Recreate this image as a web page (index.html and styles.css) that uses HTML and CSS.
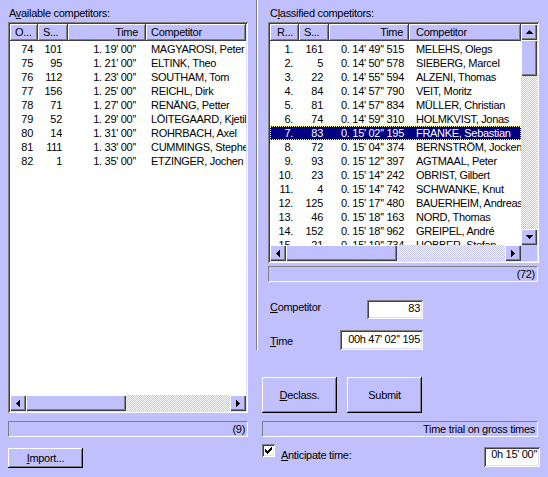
FILE: index.html
```html
<!DOCTYPE html>
<html>
<head>
<meta charset="utf-8">
<title>Competitors</title>
<link rel="stylesheet" href="styles.css">
</head>
<body>
<div class="window">
  <section class="col col-left">
    <div class="caption">A<u>v</u>ailable competitors:</div>
    <div class="listbox lb-left">
      <div class="view">
        <div class="row head cols-a">
          <div class="hc">O...</div><div class="hc">S...</div><div class="hc hc-t">Time</div><div class="hc">Competitor</div>
        </div>
        <div class="rows">
          <div class="row cols-a"><span class="c1">74</span><span class="c2">101</span><span class="ct">1. 19' 00''</span><span class="cn">MAGYAROSI, Peter</span></div>
          <div class="row cols-a"><span class="c1">75</span><span class="c2">95</span><span class="ct">1. 21' 00''</span><span class="cn">ELTINK, Theo</span></div>
          <div class="row cols-a"><span class="c1">76</span><span class="c2">112</span><span class="ct">1. 23' 00''</span><span class="cn">SOUTHAM, Tom</span></div>
          <div class="row cols-a"><span class="c1">77</span><span class="c2">156</span><span class="ct">1. 25' 00''</span><span class="cn">REICHL, Dirk</span></div>
          <div class="row cols-a"><span class="c1">78</span><span class="c2">71</span><span class="ct">1. 27' 00''</span><span class="cn">RENÄNG, Petter</span></div>
          <div class="row cols-a"><span class="c1">79</span><span class="c2">52</span><span class="ct">1. 29' 00''</span><span class="cn">LÖITEGAARD, Kjetil</span></div>
          <div class="row cols-a"><span class="c1">80</span><span class="c2">14</span><span class="ct">1. 31' 00''</span><span class="cn">ROHRBACH, Axel</span></div>
          <div class="row cols-a"><span class="c1">81</span><span class="c2">111</span><span class="ct">1. 33' 00''</span><span class="cn">CUMMINGS, Stephen</span></div>
          <div class="row cols-a"><span class="c1">82</span><span class="c2">1</span><span class="ct">1. 35' 00''</span><span class="cn">ETZINGER, Jochen</span></div>
        </div>
      </div>
      <div class="hscroll">
        <div class="sbtn"><svg width="4" height="7" viewBox="0 0 4 7"><path d="M3 0h1v7h-1z M2 1h1v5h-1z M1 2h1v3h-1z M0 3h1v1h-1z"/></svg></div>
        <div class="thumb thumb-l"></div>
        <div class="track"></div>
        <div class="sbtn"><svg width="4" height="7" viewBox="0 0 4 7"><path d="M0 0h1v7h-1z M1 1h1v5h-1z M2 2h1v3h-1z M3 3h1v1h-1z"/></svg></div>
      </div>
    </div>
  </section>

  <section class="col col-right">
    <div class="top-section">
      <div class="caption cap-r">C<u>l</u>assified competitors:</div>
      <div class="listbox lb-right">
        <div class="view">
          <div class="row head cols-b">
            <div class="hc hc-r1">R...</div><div class="hc">S...</div><div class="hc hc-t2">Time</div><div class="hc">Competitor</div>
          </div>
          <div class="rows">
            <div class="row cols-b"><span class="r1">1.</span><span class="r2">161</span><span class="rt">0. 14' 49'' 515</span><span class="rn">MELEHS, Olegs</span></div>
            <div class="row cols-b"><span class="r1">2.</span><span class="r2">5</span><span class="rt">0. 14' 50'' 578</span><span class="rn">SIEBERG, Marcel</span></div>
            <div class="row cols-b"><span class="r1">3.</span><span class="r2">22</span><span class="rt">0. 14' 55'' 594</span><span class="rn">ALZENI, Thomas</span></div>
            <div class="row cols-b"><span class="r1">4.</span><span class="r2">84</span><span class="rt">0. 14' 57'' 790</span><span class="rn">VEIT, Moritz</span></div>
            <div class="row cols-b"><span class="r1">5.</span><span class="r2">81</span><span class="rt">0. 14' 57'' 834</span><span class="rn">MÜLLER, Christian</span></div>
            <div class="row cols-b"><span class="r1">6.</span><span class="r2">74</span><span class="rt">0. 14' 59'' 310</span><span class="rn">HOLMKVIST, Jonas</span></div>
            <div class="row cols-b selected"><span class="r1">7.</span><span class="r2">83</span><span class="rt">0. 15' 02'' 195</span><span class="rn">FRANKE, Sebastian</span></div>
            <div class="row cols-b"><span class="r1">8.</span><span class="r2">72</span><span class="rt">0. 15' 04'' 374</span><span class="rn">BERNSTRÖM, Jocken</span></div>
            <div class="row cols-b"><span class="r1">9.</span><span class="r2">93</span><span class="rt">0. 15' 12'' 397</span><span class="rn">AGTMAAL, Peter</span></div>
            <div class="row cols-b"><span class="r1">10.</span><span class="r2">23</span><span class="rt">0. 15' 14'' 242</span><span class="rn">OBRIST, Gilbert</span></div>
            <div class="row cols-b"><span class="r1">11.</span><span class="r2">4</span><span class="rt">0. 15' 14'' 742</span><span class="rn">SCHWANKE, Knut</span></div>
            <div class="row cols-b"><span class="r1">12.</span><span class="r2">125</span><span class="rt">0. 15' 17'' 480</span><span class="rn">BAUERHEIM, Andreas</span></div>
            <div class="row cols-b"><span class="r1">13.</span><span class="r2">46</span><span class="rt">0. 15' 18'' 163</span><span class="rn">NORD, Thomas</span></div>
            <div class="row cols-b"><span class="r1">14.</span><span class="r2">152</span><span class="rt">0. 15' 18'' 962</span><span class="rn">GREIPEL, André</span></div>
            <div class="row cols-b"><span class="r1">15.</span><span class="r2">21</span><span class="rt">0. 15' 19'' 734</span><span class="rn">HOBBER, Stefan</span></div>
          </div>
        </div>
        <div class="vscroll">
          <div class="sbtn"><svg width="7" height="4" viewBox="0 0 7 4"><path d="M3 0h1v1h-1z M2 1h3v1h-3z M1 2h5v1h-5z M0 3h7v1h-7z"/></svg></div>
          <div class="thumb thumb-v"></div>
          <div class="track"></div>
          <div class="sbtn"><svg width="7" height="4" viewBox="0 0 7 4"><path d="M0 0h7v1h-7z M1 1h5v1h-5z M2 2h3v1h-3z M3 3h1v1h-1z"/></svg></div>
        </div>
        <div class="hscroll">
          <div class="sbtn"><svg width="4" height="7" viewBox="0 0 4 7"><path d="M3 0h1v7h-1z M2 1h1v5h-1z M1 2h1v3h-1z M0 3h1v1h-1z"/></svg></div>
          <div class="thumb thumb-r"></div>
          <div class="track"></div>
          <div class="sbtn"><svg width="4" height="7" viewBox="0 0 4 7"><path d="M0 0h1v7h-1z M1 1h1v5h-1z M2 2h1v3h-1z M3 3h1v1h-1z"/></svg></div>
        </div>
        <div class="corner"></div>
      </div>
      <div class="status status-list">(72)</div>
      <div class="field field-comp">
        <span class="flabel fl-comp"><u>C</u>ompetitor</span>
        <div class="edit edit-comp">83</div>
      </div>
      <div class="field field-time">
        <span class="flabel fl-time"><u>T</u>ime</span>
        <div class="edit edit-time">00h 47' 02'' 195</div>
      </div>
    </div>
    <div class="actions">
      <div class="btn btn-big"><span><u>D</u>eclass.</span></div>
      <div class="btn btn-big"><span>Submit</span></div>
    </div>
  </section>

  <div class="status status-left">(9)</div>
  <div class="status status-right">Time trial on gross times</div>

  <div class="bottom-left">
    <div class="btn btn-import"><span><u>I</u>mport...</span></div>
  </div>
  <div class="bottom-right">
    <div class="checkbox"><svg width="7" height="7" viewBox="0 0 7 7"><path d="M6 0h1v1h-1z M5 1h2v1h-2z M0 2h1v1h-1z M4 2h3v1h-3z M0 3h2v1h-2z M3 3h3v1h-3z M0 4h5v1h-5z M1 5h3v1h-3z M2 6h1v1h-1z"/></svg></div>
    <span class="chk-label"><u>A</u>nticipate time:</span>
    <div class="edit edit-ant">0h 15' 00''</div>
  </div>
</div>
</body>
</html>
```

FILE: styles.css
```css
* { box-sizing: border-box; }
html, body { margin: 0; padding: 0; }
body {
  width: 548px;
  height: 477px;
  overflow: hidden;
  background: #c0c0ff;
  font-family: "Liberation Sans", Arial, sans-serif;
  font-size: 11px;
  letter-spacing: -0.3px;
  color: #000;
}
u { text-decoration: underline; text-underline-offset: 1px; text-decoration-thickness: 1px; }

.window {
  display: grid;
  grid-template-columns: 240px 284px;
  grid-template-rows: 413px 24px 31px;
  column-gap: 8px;
  padding: 0 8px;
}

.col { display: flex; flex-direction: column; min-height: 0; }
.col-right { justify-content: space-between; }

.caption {
  height: 13px;
  line-height: 13px;
  margin-top: 7px;
  padding-left: 1px;
  white-space: nowrap;
}
.cap-r { padding-left: 2px; }

/* list boxes */
.listbox {
  margin-top: 2px;
  background: #fff;
  padding: 2px;
  box-shadow: inset 1px 1px #808080, inset -1px -1px #fff, inset 2px 2px #404040, inset -2px -2px #dfdfff;
  display: grid;
  min-height: 0;
}
.lb-left {
  flex: 1;
  grid-template-columns: 1fr;
  grid-template-rows: 1fr 16px;
}
.lb-right {
  width: 271px;
  height: 241px;
  flex: none;
  grid-template-columns: 1fr 16px;
  grid-template-rows: 1fr 16px;
}
.view { overflow: hidden; min-height: 0; min-width: 0; background: #fff; }
.rows { padding-top: 1px; }

.row { display: grid; height: 14px; line-height: 14px; white-space: nowrap; }
.cols-a { grid-template-columns: 28px 30px 78px 1fr; }
.cols-b { grid-template-columns: 29px 30px 80px 1fr; }
.row > span { overflow: hidden; }

.head { height: 17px; line-height: 16px; }
.hc {
  background: #c0c0ff;
  box-shadow: inset -1px -1px #404040, inset 1px 1px #fff, inset -2px -2px #808080;
  padding: 0 5px;
  overflow: hidden;
  white-space: nowrap;
}
.hc-t { text-align: right; padding-right: 8px; }
.hc-r1 { padding-left: 7px; }
.hc-t2 { text-align: right; padding-right: 6px; }
.cols-b .hc:last-child { padding-left: 7px; }
.cols-a .hc:last-child { padding-left: 5px; }

.c1 { text-align: right; padding-right: 5px; }
.c2 { text-align: right; padding-right: 6px; }
.ct { text-align: right; padding-right: 10px; }
.cn { padding-left: 5px; }

.r1 { text-align: right; padding-right: 6px; }
.r2 { text-align: right; padding-right: 6px; }
.rt { text-align: right; padding-right: 5px; }
.rn { padding-left: 7px; }

.selected {
  background: #000080;
  color: #fff;
  outline: 1px dotted #ffff80;
  outline-offset: -1px;
}

/* scrollbars */
.sbtn {
  width: 16px;
  height: 16px;
  flex: none;
  background: #c0c0ff;
  box-shadow: inset 1px 1px #fff, inset -1px -1px #404040, inset -2px -2px #808080;
  display: flex;
  align-items: center;
  justify-content: center;
}
.sbtn svg { display: block; fill: #000; shape-rendering: crispEdges; }
.thumb {
  flex: none;
  background: #c0c0ff;
  box-shadow: inset 1px 1px #fff, inset -1px -1px #404040, inset -2px -2px #808080;
}
.thumb-l { width: 100px; }
.thumb-r { width: 111px; }
.thumb-v { height: 36px; }
.track {
  flex: 1;
  background: repeating-conic-gradient(#fff 0 25%, #c0c0ff 0 50%) 0 0 / 2px 2px;
}
.hscroll { display: flex; min-width: 0; }
.vscroll { display: flex; flex-direction: column; min-height: 0; }
.corner { background: #c0c0ff; }

/* status bars */
.status {
  height: 16px;
  border: 1px solid;
  border-color: #808080 #fff #fff #808080;
  text-align: right;
  padding-right: 2px;
  line-height: 14px;
  white-space: nowrap;
}
.status-list { width: 270px; margin-top: 3px; }
.status-left { align-self: end; }
.status-right { align-self: end; margin-left: 6px; margin-right: 2px; }

/* right top section */
.top-section {
  border-left: 1px solid #808080;
  box-shadow: inset 1px 0 #fff;
  padding-left: 11px;
  display: flex;
  flex-direction: column;
}
.field {
  display: flex;
  align-items: flex-start;
  justify-content: space-between;
  width: 155px;
  padding-left: 2px;
}
.field-comp { margin-top: 18px; }
.field-time { margin-top: 11px; }
.flabel { line-height: 13px; white-space: nowrap; }
.fl-comp { margin-top: 1px; }
.fl-time { margin-top: 5px; }

.edit {
  height: 20px;
  background: #fff;
  box-shadow: inset 1px 1px #808080, inset -1px -1px #fff, inset 2px 2px #404040, inset -2px -2px #dfdfff;
  text-align: right;
  padding: 0 3px 0 3px;
  white-space: nowrap;
}
.edit-comp { width: 56px; height: 19px; line-height: 16px; }
.edit-time { width: 83px; line-height: 18px; }
.edit-ant { width: 56px; line-height: 15px; margin-left: auto; margin-top: 3px; padding-right: 3px; }

/* buttons */
.actions { display: flex; gap: 10px; padding-left: 6px; }
.btn {
  width: 75px;
  background: #c0c0ff;
  box-shadow: inset -1px -1px #000, inset 1px 1px #fff, inset -2px -2px #808080;
  display: flex;
  align-items: center;
  justify-content: center;
  white-space: nowrap;
}
.btn-big { height: 36px; }
.btn-import { height: 20px; margin-top: 11px; }

.bottom-right {
  display: flex;
  align-items: flex-start;
  padding-left: 6px;
  padding-top: 7px;
}
.checkbox {
  width: 13px;
  height: 13px;
  flex: none;
  background: #fff;
  box-shadow: inset 1px 1px #808080, inset -1px -1px #fff, inset 2px 2px #404040, inset -2px -2px #dfdfff;
  display: flex;
  align-items: center;
  justify-content: center;
}
.checkbox svg { display: block; fill: #000; shape-rendering: crispEdges; }
.chk-label { margin-left: 6px; margin-top: 5px; line-height: 13px; white-space: nowrap; }
```
